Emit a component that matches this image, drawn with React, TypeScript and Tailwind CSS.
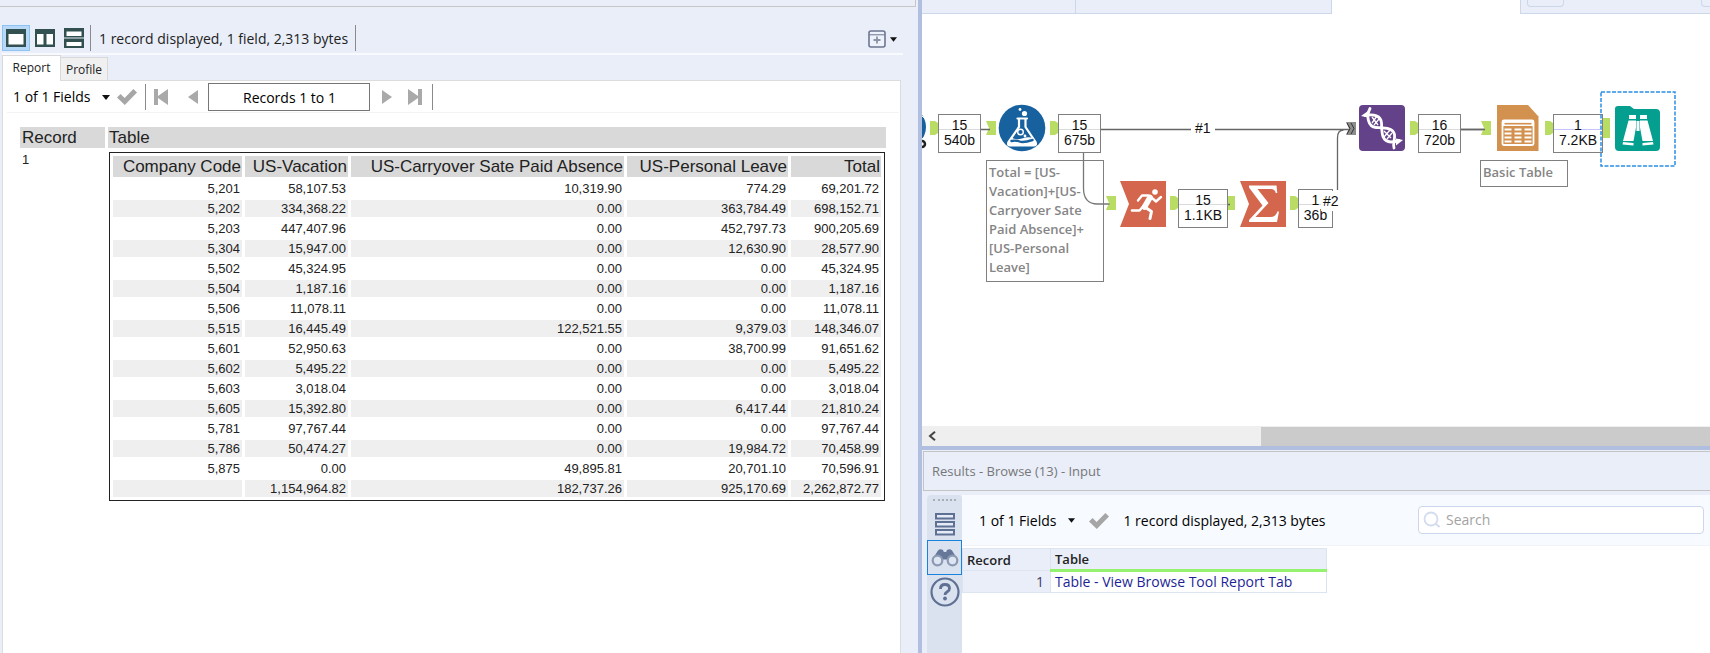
import React from "react";

type Point = { x: number; y: number };

const reportRows: string[][] = [
  ["5,201", "58,107.53", "10,319.90", "774.29", "69,201.72"],
  ["5,202", "334,368.22", "0.00", "363,784.49", "698,152.71"],
  ["5,203", "447,407.96", "0.00", "452,797.73", "900,205.69"],
  ["5,304", "15,947.00", "0.00", "12,630.90", "28,577.90"],
  ["5,502", "45,324.95", "0.00", "0.00", "45,324.95"],
  ["5,504", "1,187.16", "0.00", "0.00", "1,187.16"],
  ["5,506", "11,078.11", "0.00", "0.00", "11,078.11"],
  ["5,515", "16,445.49", "122,521.55", "9,379.03", "148,346.07"],
  ["5,601", "52,950.63", "0.00", "38,700.99", "91,651.62"],
  ["5,602", "5,495.22", "0.00", "0.00", "5,495.22"],
  ["5,603", "3,018.04", "0.00", "0.00", "3,018.04"],
  ["5,605", "15,392.80", "0.00", "6,417.44", "21,810.24"],
  ["5,781", "97,767.44", "0.00", "0.00", "97,767.44"],
  ["5,786", "50,474.27", "0.00", "19,984.72", "70,458.99"],
  ["5,875", "0.00", "49,895.81", "20,701.10", "70,596.91"],
  ["", "1,154,964.82", "182,737.26", "925,170.69", "2,262,872.77"],
];

const reportHeads = [
  "Company Code",
  "US-Vacation",
  "US-Carryover Sate Paid Absence",
  "US-Personal Leave",
  "Total",
];

function Caret({ className = "" }: { className?: string }) {
  return (
    <svg className={className} width="8" height="5" viewBox="0 0 8 5" aria-hidden="true">
      <path d="M0 0h8L4 5z" fill="#111" />
    </svg>
  );
}

function Check() {
  return (
    <svg width="20" height="16" viewBox="0 0 20 16" aria-hidden="true">
      <path d="M0 8.5 3.6 5l4 4L16.4 0 20 3.4 7.8 16z" fill="#a6a6a6" />
    </svg>
  );
}

function LayoutIcon({ kind }: { kind: "single" | "columns" | "rows" }) {
  return (
    <svg width="20" height="20" viewBox="0 0 20 20" aria-hidden="true">
      {kind === "single" && (
        <>
          <path d="M0 1h20v18H0z" fill="#31504f" />
          <path d="M2.5 6h15v10.500h-15z" fill="#fff" />
        </>
      )}
      {kind === "columns" && (
        <>
          <path d="M0 1h20v18H0z" fill="#31504f" />
          <path d="M2 6h6.500v10.500H2zM11.500 6H18v10.500h-6.500z" fill="#fff" />
        </>
      )}
      {kind === "rows" && (
        <>
          <path d="M0 0h20v9.500H0zM0 10.500h20V20H0z" fill="#31504f" />
          <path d="M2.500 3.500h15V8h-15zM2.500 14h15v4h-15z" fill="#fff" />
        </>
      )}
    </svg>
  );
}

function StepIcon({ kind }: { kind: "first" | "prev" | "next" | "last" }) {
  const wide = kind === "first" || kind === "last";
  return (
    <svg width={wide ? 14 : 10} height="16" viewBox={wide ? "0 0 14 16" : "0 0 10 16"} aria-hidden="true">
      {kind === "first" && <path d="M0 0h4v7L14 0v16L4 9v7H0z" fill="#a9a9a9" />}
      {kind === "prev" && <path d="M10 1v14L0 8z" fill="#a9a9a9" />}
      {kind === "next" && <path d="M0 1v14l10-7z" fill="#a9a9a9" />}
      {kind === "last" && <path d="M14 0h-4v7L0 0v16l10-7v7h4z" fill="#a9a9a9" />}
    </svg>
  );
}

function ReportTable() {
  return (
    <table className="table-fixed border-separate border-spacing-[3px] border border-[#222] bg-white text-right">
      <colgroup>
        <col className="w-[129px]" />
        <col className="w-[103px]" />
        <col className="w-[273px]" />
        <col className="w-[161px]" />
        <col className="w-[90px]" />
      </colgroup>
      <thead>
        <tr>
          {reportHeads.map((h) => (
            <th key={h} scope="col" className="h-[21px] bg-[#d9d9d9] px-px text-[17px] leading-[21px] font-normal whitespace-nowrap">
              {h}
            </th>
          ))}
        </tr>
      </thead>
      <tbody>
        {reportRows.map((row, r) => (
          <tr key={r}>
            {row.map((v, c) => (
              <td
                key={c}
                className={
                  r % 2 === 1
                    ? "h-[17px] bg-[#efefef] px-0.5 text-[13px] leading-[17px]"
                    : "h-[17px] px-0.5 text-[13px] leading-[17px]"
                }
              >
                {v}
              </td>
            ))}
          </tr>
        ))}
      </tbody>
    </table>
  );
}

function ReportPane() {
  return (
    <section className="flex min-w-0 flex-col bg-[#e9eef9]">
      <div className="mr-0.5 h-[7px] shrink-0 border-r border-b border-[#c6c6c6]" />
      <div className="mt-[18px] mr-[15px] ml-0.5 flex h-[30px] items-start border-b-2 border-[#f8faff]">
        <div className="flex">
          <button aria-label="Single view" className="flex h-[26px] w-[28px] items-center justify-center border border-[#8cc3f5] bg-[#b8d8f8]">
            <LayoutIcon kind="single" />
          </button>
          <button aria-label="Side by side view" className="flex h-[26px] w-[29px] items-center justify-center">
            <LayoutIcon kind="columns" />
          </button>
          <button aria-label="Stacked view" className="flex h-[26px] w-[29px] items-center justify-center">
            <LayoutIcon kind="rows" />
          </button>
        </div>
        <div className="ml-0.5 h-[26px] border-l border-[#8a8a8a]" />
        <span className="ml-2 text-sm leading-[28px] whitespace-nowrap text-[#222]">
          1 record displayed, 1 field, 2,313 bytes
        </span>
        <div className="ml-[7px] h-[26px] border-l border-[#8a8a8a]" />
        <button aria-label="New window" className="mr-1.5 ml-auto flex h-[28px] items-center gap-1">
          <svg width="18" height="18" viewBox="0 0 18 18" aria-hidden="true">
            <rect x="1" y="1" width="16" height="16" rx="2" fill="#eef2fb" stroke="#6c7690" strokeWidth="1.600" />
            <path d="M1.500 4.800h15" stroke="#6c7690" />
            <path d="M9 6.500v7M5.500 10h7" stroke="#8c93a5" strokeWidth="1.800" />
          </svg>
          <Caret className="w-[7px]" />
        </button>
      </div>
      <div role="tablist" className="ml-0.5 flex items-end text-xs text-[#222]">
        <button role="tab" aria-selected="true" className="relative z-10 -mb-px h-[26px] w-[59px] border border-b-0 border-[#d9d9d9] bg-white pb-0.5">
          Report
        </button>
        <button role="tab" aria-selected="false" className="h-[23px] w-[47px] border border-b-0 border-l-0 border-[#d9d9d9] bg-[#f0f0f0] pt-0.5">
          Profile
        </button>
      </div>
      <div className="mr-[17px] ml-0.5 flex flex-1 flex-col border border-b-0 border-[#dcdcdc] bg-white pr-px">
        <div className="ml-1 flex h-[32px] items-center border-b border-[#f4f4f4] pt-px pl-1.5 text-black">
          <button className="flex items-center gap-3 text-sm whitespace-nowrap">
            1 of 1 Fields
            <Caret />
          </button>
          <button aria-label="Apply" className="ml-[7px]">
            <Check />
          </button>
          <div className="ml-2 h-[26px] border-l border-[#8a8a8a]" />
          <button aria-label="First" className="ml-2">
            <StepIcon kind="first" />
          </button>
          <button aria-label="Previous" className="ml-5">
            <StepIcon kind="prev" />
          </button>
          <input
            aria-label="Records"
            readOnly
            value="Records 1 to 1"
            className="ml-2.5 h-7 w-[162px] border border-[#767676] bg-white text-center text-sm outline-none"
          />
          <button aria-label="Next" className="ml-3">
            <StepIcon kind="next" />
          </button>
          <button aria-label="Last" className="ml-4">
            <StepIcon kind="last" />
          </button>
          <div className="ml-2.5 h-[26px] border-l border-[#8a8a8a]" />
        </div>
        <div className="mt-[11px] ml-[14px] font-['Liberation_Sans',Arial,sans-serif] text-[#222]">
          <table className="border-separate border-spacing-[3px] text-left">
            <thead>
              <tr>
                <th scope="col" className="h-[21px] w-[85px] bg-[#d9d9d9] px-0.5 text-[17px] leading-[21px] font-normal">
                  Record
                </th>
                <th scope="col" className="h-[21px] bg-[#d9d9d9] px-px text-[17px] leading-[21px] font-normal">
                  Table
                </th>
              </tr>
            </thead>
            <tbody>
              <tr>
                <td className="px-0.5 align-top text-[13px] leading-[17px]">1</td>
                <td className="p-px">
                  <ReportTable />
                </td>
              </tr>
            </tbody>
          </table>
        </div>
      </div>
    </section>
  );
}

/* Workflow canvas */

function OutAnchor({ x, y }: Point) {
  return <path d={`M${x} ${y - 7}h5l3 2v10l-3 2h-5z`} fill="#b9dd64" />;
}

function InAnchor({ x, y }: Point) {
  return <path d={`M${x} ${y - 7}h10v14h-10l3-7z`} fill="#b9dd64" />;
}

function Wires() {
  return (
    <svg className="absolute top-0 left-0 h-full w-full" aria-hidden="true">
      <g fill="none" stroke="#666" strokeWidth="1.300">
        <path d="M178 115.500h91M293 115.500h134M538 115.500h28" />
        <path d="M415.500 176v-52q0-8 6-8" />
      </g>
      <circle cx="-17" cy="113" r="21" fill="#17619f" />
      <path d="M0 102a14 14 0 0 1 0 23" stroke="#fff" fill="none" />
      <circle cx="0" cy="130" r="3" fill="none" stroke="#222" strokeWidth="2.500" />
      <OutAnchor x={8} y={114} />
      <InAnchor x={64} y={114} />
      <OutAnchor x={128} y={114} />
      <InAnchor x={184} y={189} />
      <OutAnchor x={248} y={189} />
      <InAnchor x={303} y={189} />
      <OutAnchor x={368} y={189} />
      <OutAnchor x={488} y={114} />
      <InAnchor x={559} y={114} />
      <OutAnchor x={623} y={114} />
      <path d="M674 104h14v20h-14l4-10z" fill="#b9dd64" />
      <path d="M58 115.500h10M538 115.500h25M303 190.500h5" stroke="#666" strokeWidth="1.300" />
      <path d="M424 108h10v13h-10l3-6.500z" fill="#8c8c8c" />
      <path d="m425 109 3 5.500-3 5.500M429 109l3 5.500-3 5.500" stroke="#333" fill="none" />
      <path d="M420 115.500h5" stroke="#666" />
    </svg>
  );
}

function FormulaTool() {
  return (
    <svg width="48" height="48" viewBox="0 0 48 48" role="img" aria-label="Formula">
      <circle cx="24" cy="24" r="23.300" fill="#17619f" />
      <path
        d="M19.500 14.500h9.500M21 15v8L10.500 38q-1.500 3.500 2 3.500h23q3.500 0 2-3.500L27.500 23v-8"
        fill="none"
        stroke="#fff"
        strokeWidth="2.200"
        strokeLinecap="round"
      />
      <path d="M13 33.500q5 3 11 1t11-.500l3 5q0 2-2 2H12q-2 0-2-2z" fill="#fff" />
      <path d="M13.500 37q4-1 8 .500t13-1.500" fill="none" stroke="#17619f" strokeWidth="2.400" strokeLinecap="round" />
      <circle cx="22.500" cy="28" r="2.800" fill="none" stroke="#fff" strokeWidth="1.400" />
      <circle cx="27" cy="32" r="1.400" fill="#fff" />
      <circle cx="26.500" cy="9.500" r="2.600" fill="#fff" />
      <circle cx="22" cy="5.500" r="1.400" fill="#fff" />
    </svg>
  );
}

function RunningTool() {
  return (
    <svg width="46" height="46" viewBox="0 0 46 46" role="img" aria-label="Running total">
      <path d="M0 0h46v46H0l9-23z" fill="#d4664d" />
      <circle cx="35" cy="11" r="2.800" fill="#fff" />
      <g fill="none" stroke="#fff" strokeLinecap="round" strokeLinejoin="round">
        <path d="m30 16.500-5.500 9.500" strokeWidth="5.500" />
        <path d="M28.500 14.500H22l-4 5" strokeWidth="2.400" />
        <path d="m32 17 4 3.500 5-4.500" strokeWidth="2.400" />
        <path d="m25.500 26.500 6 4-1.500 7" strokeWidth="3" />
        <path d="m23.500 25-4 4.500H12" strokeWidth="2.600" />
      </g>
    </svg>
  );
}

function SummarizeTool() {
  return (
    <svg width="46" height="46" viewBox="0 0 46 46" role="img" aria-label="Summarize">
      <path d="M0 0h46v46H0l9-23z" fill="#d4664d" />
      <path
        d="M9 4.500h27.500l.800 7.500h-1.500q-1-4-5-4H17.500l11 14L15.500 36h15q5 0 7-5.500h1.500L37 41H9v-2l13.500-14.500L9 6.500z"
        fill="#fff"
      />
    </svg>
  );
}

function JoinTool() {
  return (
    <svg width="46" height="46" viewBox="0 0 46 46" role="img" aria-label="Append fields">
      <rect width="46" height="46" rx="4" fill="#644289" />
      <g fill="none" stroke="#fff" strokeWidth="1.300">
        <path d="m13 18 5-7M15 20l5-6M13 12l6 8M25 32l6-7M28 34l5-6M25 26l7 7" />
      </g>
      <g fill="none" stroke="#fff" strokeWidth="2.800" strokeLinecap="round">
        <path d="M11 3.500C7 11 9 22 17 22.500c8 .500 17 0 18.500 7 .800 5-2 9-.500 13.500" />
        <path d="M6 10.500c9-1.500 16 0 16.500 7.500C23 27 22 36.500 32 37q4 0 8-1.500" />
      </g>
      <path d="m2 11 7-5v6.500zM44 35l-7 5.500v-7z" fill="#fff" />
    </svg>
  );
}

function TableTool() {
  return (
    <svg width="42" height="46" viewBox="0 0 42 46" role="img" aria-label="Table">
      <path d="M0 0h31l10.500 11.500V46H0z" fill="#d2914f" />
      <rect x="5.500" y="15.500" width="31" height="24.500" rx="1.500" fill="none" stroke="#fff" strokeWidth="1.800" />
      <path d="M6 18.500h30" stroke="#fff" strokeWidth="5" />
      <path d="M7.500 18.700h27" stroke="#d2914f" strokeWidth="1.600" />
      <g stroke="#fff" strokeWidth="2" strokeDasharray="7 3">
        <path d="M7.500 24.500h27M7.500 28.500h27M7.500 32.500h27M7.500 36.500h27" />
      </g>
    </svg>
  );
}

function BrowseTool() {
  return (
    <svg width="46" height="46" viewBox="0 0 46 46" role="img" aria-label="Browse">
      <path d="M3 0h12l4 3h22q4 0 4 4v34q0 4-4 4H4q-4 0-4-4V3q0-3 3-3z" fill="#049f8e" />
      <g fill="#fff">
        <path d="M14 9h7v4h-7zM25 9h7v4h-7z" />
        <path d="M13.500 14.500h7.500v7l-2.500 13.500H8zM25 14.500h7.500L38 35H27.500L25 21.500z" />
        <path d="M21.500 15h3v10h-3z" />
        <path d="m8 36 10.500 1v2.500L7.500 38.500zM38 36l-10.500 1v2.500l11-1z" />
      </g>
    </svg>
  );
}

type CountProps = { at: string; line?: string; top: string; bottom: string };

function Count({ at, line = "border-[#dadada]", top, bottom }: CountProps) {
  return (
    <div
      className={`absolute ${at} h-[39px] border border-[#808080] bg-white pt-[3px] text-center font-['Liberation_Sans',Arial,sans-serif] text-sm leading-[15px] text-[#111]`}
    >
      <div className={`absolute inset-x-0 top-[14px] border-t ${line}`} />
      <div className="relative">{top}</div>
      <div className="relative">{bottom}</div>
    </div>
  );
}

function Canvas() {
  return (
    <div className="relative flex-1 overflow-hidden bg-white">
      <Wires />
      <div className="absolute top-[90px] left-[76px]">
        <FormulaTool />
      </div>
      <div className="absolute top-[167px] left-[198px]">
        <RunningTool />
      </div>
      <div className="absolute top-[167px] left-[318px]">
        <SummarizeTool />
      </div>
      <div className="absolute top-[91px] left-[437px]">
        <JoinTool />
      </div>
      <div className="absolute top-[91px] left-[575px]">
        <TableTool />
      </div>
      <div className="absolute top-[92px] left-[693px]">
        <BrowseTool />
      </div>

      <Count at="top-[100px] left-[16px] w-[43px]" top="15" bottom="540b" />
      <Count at="top-[100px] left-[136px] w-[43px]" top="15" bottom="675b" />
      <Count at="top-[175px] left-[256px] w-[50px]" top="15" bottom="1.1KB" />
      <Count at="top-[175px] left-[376px] w-[35px]" top="1" bottom="36b" />
      <Count at="top-[100px] left-[496px] w-[43px]" top="16" bottom="720b" />
      <Count at="top-[100px] left-[631px] w-[50px]" line="border-[#c4c4ff]" top="1" bottom="7.2KB" />

      <span className="absolute top-[106px] left-[273px] font-['Liberation_Sans',Arial,sans-serif] text-sm leading-4 text-[#111]">
        #1
      </span>
      <span className="absolute top-[177px] left-[399px] bg-white pr-1 pl-0.5 font-['Liberation_Sans',Arial,sans-serif] text-sm leading-5 text-[#111]">
        #2
      </span>

      <p className="absolute top-[146px] left-[64px] w-[118px] border border-[#808080] px-0.5 pt-0.5 pb-1 text-[13px] leading-[19px] font-semibold whitespace-nowrap text-[#858585]">
        Total = [US-
        <br />
        Vacation]+[US-
        <br />
        Carryover Sate
        <br />
        Paid Absence]+
        <br />
        [US-Personal
        <br />
        Leave]
      </p>
      <p className="absolute top-[146px] left-[558px] h-[27px] w-[88px] border border-[#808080] px-0.5 pt-0.5 text-[13px] leading-[19px] font-semibold text-[#858585]">
        Basic Table
      </p>
      <svg className="absolute top-[77px] left-[678px]" width="76" height="76" aria-hidden="true">
        <rect x="1" y="1" width="74" height="74" fill="none" stroke="#2b8fe6" strokeWidth="1.500" strokeDasharray="4 1.500" />
      </svg>
      <svg className="absolute top-[139px] left-[158px]" width="32" height="56" aria-hidden="true">
        <path d="M3.500 0v35q0 16 14 16h12" fill="none" stroke="#777" strokeWidth="1.300" />
      </svg>
    </div>
  );
}

function ResultsPane() {
  return (
    <div className="flex h-[203px] shrink-0 flex-col bg-[#e9eef9] pt-px pl-px">
      <h2 className="flex h-10 shrink-0 items-center border border-r-0 border-[#c4c4c4] pt-px pl-2 text-[13px] text-[#777]">
        Results - Browse (13) - Input
      </h2>
      <div className="mt-1 flex min-h-0 flex-1 pl-1">
        <nav className="flex w-[35px] shrink-0 flex-col items-center rounded-t bg-[#dae2f0]">
          <div className="mt-1 h-0.5 w-[23px] border-t-2 border-dotted border-[#a9adb5]" />
          <button aria-label="Messages" className="mt-3">
            <svg width="20" height="23" viewBox="0 0 20 23" aria-hidden="true">
              <g fill="#e6ecf7" stroke="#5f7192" strokeWidth="2">
                <rect x="1" y="1" width="18" height="4.500" />
                <rect x="1" y="9" width="18" height="4.500" />
                <rect x="1" y="17" width="18" height="4.500" />
              </g>
            </svg>
          </button>
          <button aria-label="Browse data" className="mt-1 flex h-[35px] w-[35px] items-center justify-center border border-[#1783dd]">
            <svg width="28" height="18" viewBox="0 0 28 18" aria-hidden="true">
              <path d="M7 1.500q2-2 5-.500l.800 2h2.400l.800-2q3-1.500 5 .500l6 9.500-7 2-4-2.500h-4L8 13l-7-2z" fill="#66779a" />
              <circle cx="6.500" cy="11.500" r="4.800" fill="#dde5f2" stroke="#8c99b3" strokeWidth="2.200" />
              <circle cx="21.500" cy="11.500" r="4.800" fill="#dde5f2" stroke="#8c99b3" strokeWidth="2.200" />
            </svg>
          </button>
          <button aria-label="Help" className="mt-0.5">
            <svg width="30" height="30" viewBox="0 0 30 30" aria-hidden="true">
              <circle cx="15" cy="15" r="13.500" fill="none" stroke="#5f7192" strokeWidth="2.200" />
              <path d="M10.500 12q0-4.500 4.500-4.500t4.500 4q0 2-2.500 3.500-2 1.200-2 3" fill="none" stroke="#5f7192" strokeWidth="2.800" />
              <circle cx="15" cy="21.500" r="1.900" fill="#5f7192" />
            </svg>
          </button>
        </nav>
        <div className="flex min-w-0 flex-1 flex-col bg-white">
          <div className="flex h-[51px] shrink-0 items-center border-b border-[#f0f3f8] bg-[#f7faff] pt-px pr-1.5 pl-[17px] text-sm text-black">
            <button className="flex items-center gap-3 whitespace-nowrap">
              1 of 1 Fields
              <Caret className="w-[7px]" />
            </button>
            <button aria-label="Apply" className="ml-3.5">
              <Check />
            </button>
            <span className="ml-3.5 whitespace-nowrap">1 record displayed, 2,313 bytes</span>
            <label className="mb-0.5 ml-auto flex h-7 w-[286px] items-center gap-1.5 rounded border border-[#ccd6ec] bg-white px-1">
              <svg width="17" height="17" viewBox="0 0 17 17" aria-hidden="true">
                <circle cx="8" cy="8" r="6.500" fill="none" stroke="#d3dcee" strokeWidth="1.800" />
                <path d="m13 13 3.500 3" stroke="#d3dcee" strokeWidth="2" />
              </svg>
              <input
                aria-label="Search"
                placeholder="Search"
                className="min-w-0 flex-1 bg-transparent outline-none placeholder:text-[#a3a3a3]"
              />
            </label>
          </div>
          <table className="mt-0.5 w-[365px] table-fixed border-collapse text-[13px]">
            <colgroup>
              <col className="w-[88px]" />
              <col />
            </colgroup>
            <thead>
              <tr className="h-[22px] bg-[#e9eef9] text-left text-[#222]">
                <th scope="col" className="border border-[#dde4f1] pl-1 leading-5 font-semibold">
                  Record
                </th>
                <th scope="col" className="border border-b-[3px] border-[#dde4f1] border-b-[#94f26e] pl-1 leading-[18px] font-semibold">
                  Table
                </th>
              </tr>
            </thead>
            <tbody>
              <tr className="h-[22px]">
                <td className="border border-[#dde4f1] bg-[#e9eef9] pr-1.5 text-right text-sm leading-5 text-[#443a6b]">1</td>
                <td className="border border-[#dde4f1] pl-1 text-sm leading-5 text-[#1d1f96]">Table - View Browse Tool Report Tab</td>
              </tr>
            </tbody>
          </table>
        </div>
      </div>
    </div>
  );
}

export default function App() {
  return (
    <main className="grid min-h-screen grid-cols-[minmax(0,918fr)_4px_minmax(0,788fr)] bg-white font-['Open_Sans','Noto_Sans',sans-serif]">
      <ReportPane />
      <div className="bg-[#b0bfe0]" />
      <section className="flex min-w-0 flex-col">
        <div className="flex h-3.5 shrink-0 justify-between">
          <div className="flex w-[410px] border-r border-b border-[#cdd7ea] bg-[#e9eef9]">
            <div className="w-[154px] border-r border-[#cdd7ea]" />
          </div>
          <div className="flex w-[190px] items-start justify-between overflow-hidden border-b border-l border-[#cdd7ea] bg-[#e9eef9] pl-1.5">
            <div className="h-[7px] w-[37px] rounded-b border border-t-0 border-[#cdd7ea]" />
            <div className="h-[7px] w-[9px] rounded-bl border-b border-l border-[#cdd7ea]" />
          </div>
        </div>
        <Canvas />
        <div className="flex h-5 shrink-0 items-center bg-[#efefef]">
          <button aria-label="Scroll left" className="ml-1.5 flex h-full w-3 items-center">
            <svg width="8" height="10" viewBox="0 0 8 10" aria-hidden="true">
              <path d="M7 .800 2 5l5 4.200" fill="none" stroke="#444" strokeWidth="2" />
            </svg>
          </button>
          <div className="ml-auto h-[19px] w-[57%] bg-[#cbcbcb]" />
        </div>
        <div className="h-1 shrink-0 bg-[#b0bfe0]" />
        <ResultsPane />
      </section>
    </main>
  );
}
